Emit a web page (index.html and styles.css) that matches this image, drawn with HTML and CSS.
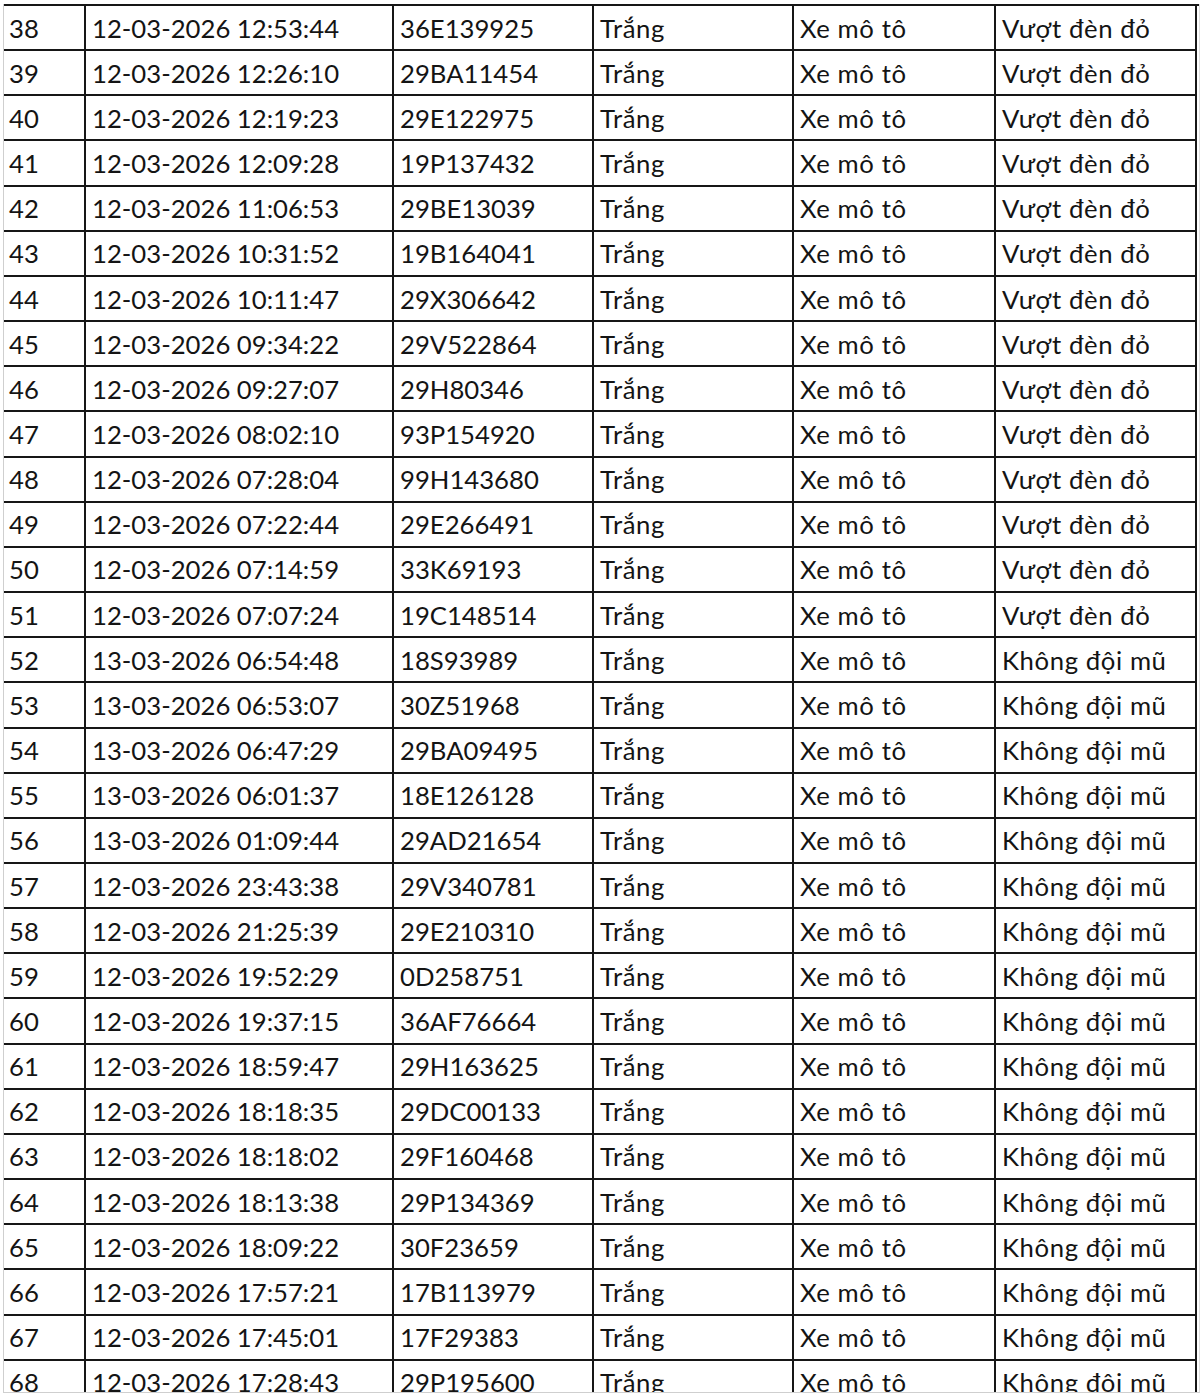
FILE: index.html
```html
<!DOCTYPE html>
<html lang="vi">
<head>
<meta charset="utf-8">
<title>Danh sách vi phạm</title>
<link rel="stylesheet" href="styles.css">
</head>
<body>
<div class="sheet">
  <div class="grid" id="grid">
    <div class="c">38</div><div class="c">12-03-2026 12:53:44</div><div class="c">36E139925</div><div class="c">Trắng</div><div class="c">Xe mô tô</div><div class="c">Vượt đèn đỏ</div>
    <div class="c">39</div><div class="c">12-03-2026 12:26:10</div><div class="c">29BA11454</div><div class="c">Trắng</div><div class="c">Xe mô tô</div><div class="c">Vượt đèn đỏ</div>
    <div class="c">40</div><div class="c">12-03-2026 12:19:23</div><div class="c">29E122975</div><div class="c">Trắng</div><div class="c">Xe mô tô</div><div class="c">Vượt đèn đỏ</div>
    <div class="c">41</div><div class="c">12-03-2026 12:09:28</div><div class="c">19P137432</div><div class="c">Trắng</div><div class="c">Xe mô tô</div><div class="c">Vượt đèn đỏ</div>
    <div class="c">42</div><div class="c">12-03-2026 11:06:53</div><div class="c">29BE13039</div><div class="c">Trắng</div><div class="c">Xe mô tô</div><div class="c">Vượt đèn đỏ</div>
    <div class="c">43</div><div class="c">12-03-2026 10:31:52</div><div class="c">19B164041</div><div class="c">Trắng</div><div class="c">Xe mô tô</div><div class="c">Vượt đèn đỏ</div>
    <div class="c">44</div><div class="c">12-03-2026 10:11:47</div><div class="c">29X306642</div><div class="c">Trắng</div><div class="c">Xe mô tô</div><div class="c">Vượt đèn đỏ</div>
    <div class="c">45</div><div class="c">12-03-2026 09:34:22</div><div class="c">29V522864</div><div class="c">Trắng</div><div class="c">Xe mô tô</div><div class="c">Vượt đèn đỏ</div>
    <div class="c">46</div><div class="c">12-03-2026 09:27:07</div><div class="c">29H80346</div><div class="c">Trắng</div><div class="c">Xe mô tô</div><div class="c">Vượt đèn đỏ</div>
    <div class="c">47</div><div class="c">12-03-2026 08:02:10</div><div class="c">93P154920</div><div class="c">Trắng</div><div class="c">Xe mô tô</div><div class="c">Vượt đèn đỏ</div>
    <div class="c">48</div><div class="c">12-03-2026 07:28:04</div><div class="c">99H143680</div><div class="c">Trắng</div><div class="c">Xe mô tô</div><div class="c">Vượt đèn đỏ</div>
    <div class="c">49</div><div class="c">12-03-2026 07:22:44</div><div class="c">29E266491</div><div class="c">Trắng</div><div class="c">Xe mô tô</div><div class="c">Vượt đèn đỏ</div>
    <div class="c">50</div><div class="c">12-03-2026 07:14:59</div><div class="c">33K69193</div><div class="c">Trắng</div><div class="c">Xe mô tô</div><div class="c">Vượt đèn đỏ</div>
    <div class="c">51</div><div class="c">12-03-2026 07:07:24</div><div class="c">19C148514</div><div class="c">Trắng</div><div class="c">Xe mô tô</div><div class="c">Vượt đèn đỏ</div>
    <div class="c">52</div><div class="c">13-03-2026 06:54:48</div><div class="c">18S93989</div><div class="c">Trắng</div><div class="c">Xe mô tô</div><div class="c">Không đội mũ</div>
    <div class="c">53</div><div class="c">13-03-2026 06:53:07</div><div class="c">30Z51968</div><div class="c">Trắng</div><div class="c">Xe mô tô</div><div class="c">Không đội mũ</div>
    <div class="c">54</div><div class="c">13-03-2026 06:47:29</div><div class="c">29BA09495</div><div class="c">Trắng</div><div class="c">Xe mô tô</div><div class="c">Không đội mũ</div>
    <div class="c">55</div><div class="c">13-03-2026 06:01:37</div><div class="c">18E126128</div><div class="c">Trắng</div><div class="c">Xe mô tô</div><div class="c">Không đội mũ</div>
    <div class="c">56</div><div class="c">13-03-2026 01:09:44</div><div class="c">29AD21654</div><div class="c">Trắng</div><div class="c">Xe mô tô</div><div class="c">Không đội mũ</div>
    <div class="c">57</div><div class="c">12-03-2026 23:43:38</div><div class="c">29V340781</div><div class="c">Trắng</div><div class="c">Xe mô tô</div><div class="c">Không đội mũ</div>
    <div class="c">58</div><div class="c">12-03-2026 21:25:39</div><div class="c">29E210310</div><div class="c">Trắng</div><div class="c">Xe mô tô</div><div class="c">Không đội mũ</div>
    <div class="c">59</div><div class="c">12-03-2026 19:52:29</div><div class="c">0D258751</div><div class="c">Trắng</div><div class="c">Xe mô tô</div><div class="c">Không đội mũ</div>
    <div class="c">60</div><div class="c">12-03-2026 19:37:15</div><div class="c">36AF76664</div><div class="c">Trắng</div><div class="c">Xe mô tô</div><div class="c">Không đội mũ</div>
    <div class="c">61</div><div class="c">12-03-2026 18:59:47</div><div class="c">29H163625</div><div class="c">Trắng</div><div class="c">Xe mô tô</div><div class="c">Không đội mũ</div>
    <div class="c">62</div><div class="c">12-03-2026 18:18:35</div><div class="c">29DC00133</div><div class="c">Trắng</div><div class="c">Xe mô tô</div><div class="c">Không đội mũ</div>
    <div class="c">63</div><div class="c">12-03-2026 18:18:02</div><div class="c">29F160468</div><div class="c">Trắng</div><div class="c">Xe mô tô</div><div class="c">Không đội mũ</div>
    <div class="c">64</div><div class="c">12-03-2026 18:13:38</div><div class="c">29P134369</div><div class="c">Trắng</div><div class="c">Xe mô tô</div><div class="c">Không đội mũ</div>
    <div class="c">65</div><div class="c">12-03-2026 18:09:22</div><div class="c">30F23659</div><div class="c">Trắng</div><div class="c">Xe mô tô</div><div class="c">Không đội mũ</div>
    <div class="c">66</div><div class="c">12-03-2026 17:57:21</div><div class="c">17B113979</div><div class="c">Trắng</div><div class="c">Xe mô tô</div><div class="c">Không đội mũ</div>
    <div class="c">67</div><div class="c">12-03-2026 17:45:01</div><div class="c">17F29383</div><div class="c">Trắng</div><div class="c">Xe mô tô</div><div class="c">Không đội mũ</div>
    <div class="c">68</div><div class="c">12-03-2026 17:28:43</div><div class="c">29P195600</div><div class="c">Trắng</div><div class="c">Xe mô tô</div><div class="c">Không đội mũ</div>
  </div>
</div>
</body>
</html>
```

FILE: styles.css
```css
html, body {
  margin: 0;
  padding: 0;
  background: #ffffff;
}

.sheet {
  margin: 4px 0 0 3px;
  width: 1195px;
  height: 1388px;
  overflow: hidden;
  border-left: 1px solid #cfcfcf;
  border-bottom: 1px solid #cfcfcf;
  border-right: 1px solid #dedede;
}

.grid {
  display: grid;
  grid-template-columns: 82px 308px 200px 200px 202px 201px;
  grid-auto-rows: 45.17px;
  border-top: 2px solid #161616;
  font-family: Lato, "Noto Sans", sans-serif;
  font-size: 25.7px;
  color: #141414;
}

.c {
  box-sizing: border-box;
  border-right: 2px solid #161616;
  border-bottom: 2px solid #161616;
  padding-left: 6px;
  display: flex;
  align-items: center;
  white-space: nowrap;
  overflow: hidden;
}

.c:nth-child(6n+1) {
  padding-left: 5px;
}

.c:nth-child(6n+4),
.c:nth-child(6n+5),
.c:nth-child(6n) {
  letter-spacing: 0.6px;
}
```
